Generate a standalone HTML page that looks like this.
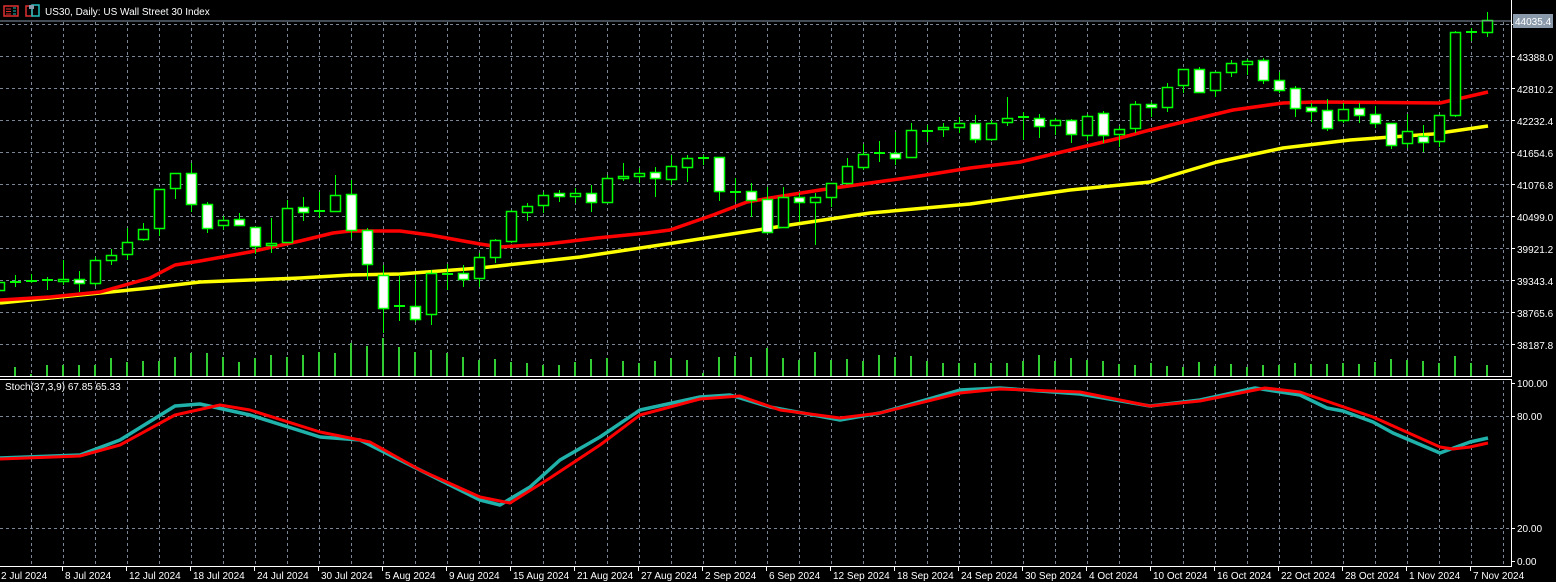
<!DOCTYPE html>
<html><head><meta charset="utf-8"><style>
html,body{margin:0;padding:0;background:#000;width:1556px;height:582px;overflow:hidden}
svg{display:block}
text{font-family:"Liberation Sans",sans-serif;font-size:10px;fill:#fff}
</style></head><body>
<svg id="s" width="1556" height="582" xmlns="http://www.w3.org/2000/svg">
<rect width="1556" height="582" fill="#000"/>
<g id="grid" stroke="#7a8696" stroke-width="1" stroke-dasharray="3,3" fill="none"></g>
<g id="vol"></g>
<polyline id="yel" fill="none" stroke="#ffff00" stroke-width="3.5" stroke-linejoin="round"/>
<polyline id="red" fill="none" stroke="#ff0000" stroke-width="3.5" stroke-linejoin="round"/>
<g id="cdl"></g>
<polyline id="st1" fill="none" stroke="#20b2aa" stroke-width="3.5" stroke-linejoin="round"/>
<polyline id="st2" fill="none" stroke="#ff0000" stroke-width="3" stroke-linejoin="round"/>
<line x1="0" y1="21" x2="1511" y2="21" stroke="#8899aa" stroke-width="1"/>
<g stroke="#fff" stroke-width="1" fill="none">
<line x1="0" y1="376.5" x2="1512" y2="376.5"/>
<line x1="0" y1="379.5" x2="1512" y2="379.5"/>
<line x1="1511.5" y1="0" x2="1511.5" y2="376"/>
<line x1="1511.5" y1="379" x2="1511.5" y2="566"/>
<line x1="0" y1="566.5" x2="1512" y2="566.5"/>
<g id="ticks"></g>
</g>
<rect x="4" y="6" width="14" height="10" fill="none" stroke="#e03030" stroke-width="1.5"/>
<line x1="6" y1="9" x2="11" y2="9" stroke="#e03030"/><line x1="6" y1="11.5" x2="11" y2="11.5" stroke="#e03030"/><line x1="6" y1="14" x2="11" y2="14" stroke="#e03030"/>
<line x1="13" y1="8" x2="16" y2="8" stroke="#20c0c0"/><line x1="13" y1="11" x2="16" y2="11" stroke="#20c0c0"/><line x1="13" y1="14" x2="16" y2="14" stroke="#20c0c0"/>
<rect x="26" y="6" width="6" height="10" fill="none" stroke="#e03030" stroke-width="1.5"/>
<rect x="32" y="5" width="7" height="11" fill="none" stroke="#20c0c0" stroke-width="1.5"/>
<rect x="29" y="5" width="5" height="4" fill="#8899aa"/>
<text x="45" y="15">US30, Daily:  US Wall Street 30 Index</text>
<rect x="1513" y="14" width="40" height="14" fill="#8a9aaa"/>
<text x="1515" y="25" fill="#fff">44035.4</text>
<text x="1517" y="61">43388.0</text>
<text x="1517" y="93">42810.2</text>
<text x="1517" y="125">42232.4</text>
<text x="1517" y="157">41654.6</text>
<text x="1517" y="189">41076.8</text>
<text x="1517" y="221">40499.0</text>
<text x="1517" y="253">39921.2</text>
<text x="1517" y="285">39343.4</text>
<text x="1517" y="317">38765.6</text>
<text x="1517" y="349">38187.8</text>
<text x="1517" y="387">100.00</text>
<text x="1517" y="420">80.00</text>
<text x="1517" y="532">20.00</text>
<text x="1517" y="565">0.00</text>
<text x="5" y="390" font-size="9.5">Stoch(37,3,9) 67.85 65.33</text>
<g id="tl"></g>
</svg>
<script>
var NS="http://www.w3.org/2000/svg";
function el(p,n,a){var e=document.createElementNS(NS,n);for(var k in a)e.setAttribute(k,a[k]);document.getElementById(p).appendChild(e);return e;}
for(var x=31;x<1511;x+=32){el("grid","line",{x1:x+.5,y1:22,x2:x+.5,y2:376});el("grid","line",{x1:x+.5,y1:381,x2:x+.5,y2:566});}
for(var y=24;y<=344;y+=32){el("grid","line",{x1:0,y1:y+.5,x2:1511,y2:y+.5});}
el("grid","line",{x1:0,y1:416.5,x2:1511,y2:416.5});
el("grid","line",{x1:0,y1:528.5,x2:1511,y2:528.5});
[24,56,88,120,152,184,216,248,280,312,344,383,416,528,561].forEach(function(y){el("ticks","line",{x1:1511,y1:y+.5,x2:1515,y2:y+.5});});
var tl=["2 Jul 2024","8 Jul 2024","12 Jul 2024","18 Jul 2024","24 Jul 2024","30 Jul 2024","5 Aug 2024","9 Aug 2024","15 Aug 2024","21 Aug 2024","27 Aug 2024","2 Sep 2024","6 Sep 2024","12 Sep 2024","18 Sep 2024","24 Sep 2024","30 Sep 2024","4 Oct 2024","10 Oct 2024","16 Oct 2024","22 Oct 2024","28 Oct 2024","1 Nov 2024","7 Nov 2024"];
tl.forEach(function(t,i){var tx=-2+64*i;el("ticks","line",{x1:tx+.5,y1:566,x2:tx+.5,y2:571});var e=el("tl","text",{x:tx+3,y:579});e.textContent=t;});
var C=[[282,290,280,292,'h'],[282,282,275,287,'d'],[281,281,274,283,'d'],[280,280,277,290,'d'],[279,281,260,285,'h'],[279,283,271,292,'w'],[260,283,257,286,'h'],[255,260,249,265,'h'],[242,254,228,260,'h'],[229,239,223,241,'h'],
[189,228,189,236,'h'],[173,188,173,199,'h'],[173,204,163,212,'w'],[204,228,202,233,'w'],[220,225,216,230,'h'],[219,225,213,225,'w'],[227,246,227,254,'w'],[243,245,218,253,'h'],[208,242,200,242,'h'],[207,212,197,221,'w'],
[211,211,192,218,'d'],[195,211,175,212,'h'],[194,230,180,238,'w'],[230,264,228,280,'w'],[275,308,265,333,'w'],[306,306,275,321,'d'],[306,319,275,322,'w'],[273,314,270,325,'h'],[274,274,264,290,'d'],[273,279,265,287,'w'],
[257,278,253,287,'h'],[240,257,239,263,'h'],[211,241,210,243,'h'],[206,212,203,221,'h'],[195,205,192,213,'h'],[193,196,190,202,'w'],[193,196,188,203,'h'],[193,202,185,212,'w'],[178,202,175,202,'h'],[176,178,163,181,'h'],
[173,176,168,183,'h'],[172,178,167,197,'w'],[166,179,155,185,'h'],[158,167,155,182,'h'],[158,158,155,165,'d'],[157,191,157,201,'w'],[192,192,178,202,'d'],[191,200,183,217,'w'],[199,232,187,232,'w'],[197,227,187,227,'h'],
[197,202,193,222,'w'],[197,202,193,245,'h'],[183,197,183,207,'h'],[166,183,158,183,'h'],[154,167,144,170,'h'],[153,153,141,162,'d'],[153,158,132,165,'w'],[130,157,123,158,'h'],[131,131,125,142,'d'],[127,129,123,137,'h'],
[123,127,117,133,'h'],[123,139,115,143,'w'],[123,139,120,141,'h'],[118,122,97,126,'h'],[117,117,112,140,'d'],[118,126,114,138,'w'],[120,125,118,135,'h'],[120,134,119,143,'w'],[116,135,114,141,'h'],[113,135,111,143,'w'],
[129,134,126,147,'h'],[104,128,101,133,'h'],[104,107,102,117,'w'],[87,107,83,112,'h'],[69,85,69,93,'h'],[69,92,67,93,'w'],[72,90,72,97,'h'],[63,72,60,77,'h'],[61,64,59,75,'h'],[60,80,58,84,'w'],
[80,90,72,93,'w'],[88,108,86,117,'w'],[107,111,103,122,'w'],[110,128,99,131,'w'],[109,120,103,123,'h'],[108,115,103,123,'w'],[114,123,106,128,'w'],[123,145,123,149,'w'],[131,143,114,148,'h'],[136,142,125,152,'w'],
[115,141,115,147,'h'],[32,115,31,117,'h'],[32,32,28,41,'d'],[20,32,12,37,'h']];
var V=[367,367,374,365,365,365,365,358,362,361,361,357,353,353,357,362,358,355,357,355,352,353,343,346,338,347,352,350,353,357,360,359,362,363,365,365,362,359,358,361,363,361,358,360,373,357,356,357,348,358,360,352,360,359,361,355,357,356,361,363,363,363,363,363,361,355,361,358,360,361,364,365,363,366,367,362,366,364,367,365,365,363,364,364,363,364,362,359,360,361,363,356,363,365];
C.forEach(function(c,i){var x=-1+16*i;
 el("vol","rect",{x:x-1,y:V[i],width:2,height:376-V[i],fill:"#32cd32"});
 el("cdl","line",{x1:x+.5,y1:c[2],x2:x+.5,y2:c[3],stroke:"#00ff00","stroke-width":1});
 if(c[4]=='d'){el("cdl","rect",{x:x-5,y:c[0]-1,width:11,height:2,fill:"#00ff00"});}
 else{var h=Math.max(c[1]-c[0],2);el("cdl","rect",{x:x-4.5,y:c[0]+.5,width:10,height:h,fill:c[4]=='w'?"#fff":"#000",stroke:"#00ff00","stroke-width":1.5});}
});
function pl(id,pts){document.getElementById(id).setAttribute("points",pts.map(function(p){return p.join(",")}).join(" "));}
pl("red",[[0,300],[50,297],[100,292],[150,278],[175,265],[200,261],[250,252],[300,241],[333,233],[350,231],[400,231],[430,235],[480,244],[500,247],[547,244],[597,238],[647,233],[670,230],[713,215],[747,202],[770,198],[820,190],[870,183],[920,176],[970,168],[1020,162],[1070,150],[1120,138],[1150,130],[1183,122],[1233,110],[1283,103],[1317,102],[1440,103],[1488,92]]);
pl("yel",[[0,303],[100,293],[150,288],[200,282],[250,280],[300,278],[350,275],[400,274],[480,268],[580,257],[680,242],[770,228],[870,213],[970,204],[1070,190],[1150,182],[1217,162],[1283,148],[1350,140],[1433,134],[1488,126]]);
pl("st1",[[0,458],[80,455],[120,440],[175,406],[200,404],[250,415],[320,437],[360,440],[420,470],[480,500],[500,505],[530,487],[560,460],[600,437],[640,410],[700,397],[730,395],[770,407],[840,420],[880,413],[960,390],[1000,388],[1080,394],[1150,406],[1200,400],[1255,388],[1300,395],[1327,408],[1343,411],[1373,422],[1393,433],[1440,453],[1470,442],[1488,438]]);
pl("st2",[[0,459],[80,456],[120,445],[175,415],[220,405],[250,410],[320,432],[370,442],[420,470],[480,497],[510,503],[550,478],[600,445],[640,415],[700,399],[740,396],[780,410],[840,418],[880,413],[960,393],[1000,389],[1080,392],[1150,406],[1200,401],[1265,388],[1300,392],[1373,417],[1440,447],[1453,449],[1470,447],[1488,443]]);
</script>
</body></html>
